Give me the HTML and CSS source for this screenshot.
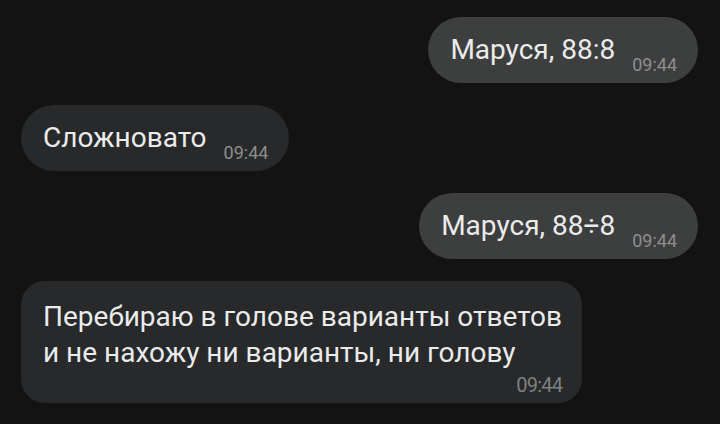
FILE: index.html
```html
<!DOCTYPE html>
<html lang="ru">
<head>
<meta charset="utf-8">
<link rel="stylesheet" href="styles.css">
</head>
<body>
<div class="chat">
  <div class="row out">
    <div class="bubble"><span class="text">Маруся, 88:8</span><span class="time">09:44</span></div>
  </div>
  <div class="row in">
    <div class="bubble"><span class="text">Сложновато</span><span class="time">09:44</span></div>
  </div>
  <div class="row out">
    <div class="bubble"><span class="text">Маруся, 88÷8</span><span class="time">09:44</span></div>
  </div>
  <div class="row in">
    <div class="bubble multi"><span class="text">Перебираю в голове варианты ответов<br>и не нахожу ни варианты, ни голову</span><span class="time narrow">09:44</span></div>
  </div>
</div>
</body>
</html>
```
FILE: styles.css
```css
html, body {
  margin: 0;
  padding: 0;
  background: #131313;
}
body {
  width: 720px;
  height: 424px;
  overflow: hidden;
  font-family: Roboto, "Noto Sans", sans-serif;
}
.chat {
  display: flex;
  flex-direction: column;
  gap: 22px;
  padding: 17px 22px 0 21px;
}
.row {
  display: flex;
}
.row.out {
  justify-content: flex-end;
}
.row.in {
  justify-content: flex-start;
}
.bubble {
  display: flex;
  align-items: flex-end;
  padding: 16px 21px 8px 22px;
  border-radius: 33px;
  color: #ebebeb;
}
.out .bubble {
  background: #3d3f3f;
}
.in .bubble {
  background: #27292a;
}
.text {
  font-size: 28px;
  line-height: 33px;
  margin-bottom: 9px;
  white-space: nowrap;
}
.time {
  font-size: 18px;
  line-height: 21px;
  color: #8c8e8e;
  margin-left: 17px;
}
.bubble.multi {
  flex-direction: column;
  align-items: stretch;
  padding: 18px 20px 7px 22px;
  border-radius: 24px;
}
.bubble.multi .text {
  line-height: 36px;
  margin-bottom: 0;
}
.time.narrow {
  align-self: flex-end;
  margin-top: 3px;
  margin-left: 0;
  font-size: 20px;
  line-height: 22px;
  letter-spacing: -0.8px;
  color: #7f8181;
}
```
